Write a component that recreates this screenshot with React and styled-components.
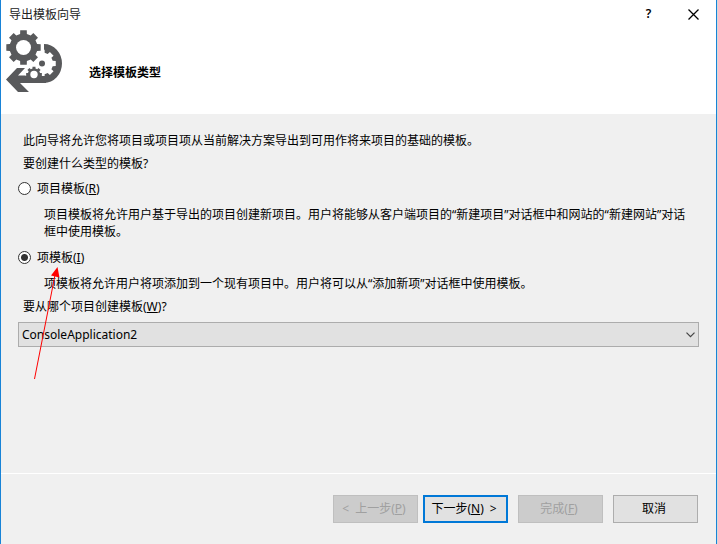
import { useState } from "react";
import styled, { createGlobalStyle } from "styled-components";

const GlobalStyle = createGlobalStyle`
  * {
    box-sizing: border-box;
  }
  body {
    margin: 0;
    background: #fff;
    color: #000;
    font-family: "Noto Sans", "Noto Sans CJK SC", sans-serif;
    font-size: 12px;
    line-height: 16px;
  }
  button, input, select {
    font: inherit;
    color: inherit;
  }
`;

const Frame = styled.div`
  background: #d8d8d8;
  padding-right: 1px;
`;

const Dialog = styled.form`
  display: flex;
  flex-direction: column;
  min-height: 100vh;
  border: solid #1883d7;
  border-width: 0 1px;
  background: #f0f0f0;
`;

const TitleBar = styled.div`
  display: flex;
  align-items: center;
  height: 28px;
  padding-left: 8px;
  background: #fff;
  color: #222;
`;

const Caption = styled.span`
  flex: 1;
  padding-top: 2px;
`;

const CaptionButton = styled.button`
  display: flex;
  align-items: center;
  justify-content: center;
  width: 45px;
  height: 28px;
  padding: 0;
  border: 0;
  background: none;
  color: #000;
  font-weight: 600;
`;

const Header = styled.header`
  display: flex;
  align-items: center;
  gap: 26px;
  height: 86px;
  padding: 0 4px 20px;
  background: #fff;
`;

const Heading = styled.h1`
  margin: 24px 0 0;
  font-size: 12px;
  font-weight: 700;
`;

const Body = styled.main`
  flex: 1;
  padding: 19px 17px;
`;

const Text = styled.p`
  margin: 0 5px 7px;
`;

const Option = styled.label`
  display: flex;
  align-items: flex-start;
  gap: 6px;
  width: fit-content;
  margin-top: 9px;
`;

const Radio = styled.input`
  appearance: none;
  width: 13px;
  height: 13px;
  margin: 1px 0 0;
  border: 1px solid #333;
  border-radius: 50%;
  background: #fff;
  &:checked {
    background: radial-gradient(circle, #333 3px, #fff 4px);
  }
`;

const Hint = styled.p`
  margin: 9px 8px 10px 26px;
  line-height: 17px;
`;

const FieldLabel = styled.label`
  display: block;
  margin: -3px 5px 7px;
`;

const SelectBox = styled.div`
  display: grid;
  align-items: center;
  svg {
    grid-area: 1 / 1;
    justify-self: end;
    margin-right: 4px;
    pointer-events: none;
  }
`;

const Select = styled.select`
  grid-area: 1 / 1;
  appearance: none;
  width: 100%;
  height: 25px;
  padding: 0 20px 0 3px;
  border: 1px solid #acacac;
  border-radius: 0;
  background: #e1e1e1;
`;

const Footer = styled.footer`
  display: flex;
  justify-content: flex-end;
  gap: 10px;
  height: 71px;
  padding: 21px 18px 0;
  border-top: 1px solid #fff;
`;

const StepButtons = styled.div`
  display: flex;
  gap: 5px;
`;

const Button = styled.button`
  display: flex;
  align-items: center;
  justify-content: center;
  gap: ${(props) => (props.$arrow ? "6px" : "0")};
  width: 85px;
  height: 28px;
  padding: 0 3px 0 0;
  border: ${(props) => (props.$primary ? "2px solid #0078d7" : "1px solid #adadad")};
  background: #e1e1e1;
  &:disabled {
    border-color: #bfbfbf;
    background: #ccc;
    color: #a0a0a0;
  }
`;

// drawn over the form, pointing at the chosen option
const Pointer = styled.svg`
  position: absolute;
  left: 30px;
  top: 264px;
  pointer-events: none;
`;

function gear(cx, cy, outer, inner, teeth, turn = 0) {
  const step = (Math.PI * 2) / teeth;
  const points = [];
  for (let i = 0; i < teeth; i++) {
    const a = i * step + turn;
    [[-0.31, inner], [-0.24, outer], [0.24, outer], [0.31, inner]].forEach(([t, r]) => {
      points.push(`${(cx + r * Math.cos(a + t * step)).toFixed(2)},${(cy + r * Math.sin(a + t * step)).toFixed(2)}`);
    });
  }
  return points.join(" ");
}

function ExportIcon() {
  return (
    <svg width="58" height="66" viewBox="5 28 58 66" aria-hidden="true">
      <path d="M44 44A18 19.500 0 0 1 44 83H20L29 92H18L6 79.500L17 68H25L18 75.500H44Z" fill="#58595b" />
      <polygon points={gear(42, 63.5, 14, 11, 8)} fill="#fff" />
      <circle cx="42" cy="63.500" r="3" fill="#58595b" />
      <circle cx="34" cy="74.500" r="8.500" fill="#fff" />
      <polygon points={gear(34, 74.5, 8, 6.2, 8)} fill="#58595b" />
      <path d="M18 76H46V83H20Z" fill="#58595b" />
      <circle cx="34" cy="74.500" r="3.700" fill="#fff" />
      <polygon points={gear(23.5, 47.5, 17.5, 14, 8)} fill="#58595b" />
      <circle cx="23.500" cy="47.500" r="7.500" fill="#fff" />
    </svg>
  );
}

export default function App() {
  const [kind, setKind] = useState("item");

  return (
    <Frame>
      <GlobalStyle />
      <Dialog onSubmit={(e) => e.preventDefault()}>
        <TitleBar>
          <Caption>导出模板向导</Caption>
          <CaptionButton type="button" aria-label="帮助">?</CaptionButton>
          <CaptionButton type="button" aria-label="关闭">
            <svg width="11" height="11" viewBox="0 0 11 11" stroke="#000" strokeWidth="1.300">
              <path d="M0.500 0.500L10.500 10.500M10.500 0.500L0.500 10.500" />
            </svg>
          </CaptionButton>
        </TitleBar>
        <Header>
          <ExportIcon />
          <Heading>选择模板类型</Heading>
        </Header>
        <Body>
          <Text>此向导将允许您将项目或项目项从当前解决方案导出到可用作将来项目的基础的模板。</Text>
          <Text>要创建什么类型的模板?</Text>
          <Option>
            <Radio type="radio" name="kind" checked={kind === "project"} onChange={() => setKind("project")} />
            <span>项目模板(<u>R</u>)</span>
          </Option>
          <Hint>
            项目模板将允许用户基于导出的项目创建新项目。用户将能够从客户端项目的“新建项目”对话框中和网站的“新建网站”对话框中使用模板。
          </Hint>
          <Option>
            <Radio type="radio" name="kind" checked={kind === "item"} onChange={() => setKind("item")} />
            <span>项模板(<u>I</u>)</span>
          </Option>
          <Hint>项模板将允许用户将项添加到一个现有项目中。用户将可以从“添加新项”对话框中使用模板。</Hint>
          <FieldLabel htmlFor="project">要从哪个项目创建模板(<u>W</u>)?</FieldLabel>
          <SelectBox>
            <Select id="project">
              <option>ConsoleApplication2</option>
            </Select>
            <svg width="9" height="6" viewBox="0 0 9 6" fill="none" stroke="#444" strokeWidth="1.200">
              <path d="M0.500 0.700L4.500 4.700L8.500 0.700" />
            </svg>
          </SelectBox>
        </Body>
        <Footer>
          <StepButtons>
            <Button type="button" disabled $arrow>
              <span>&lt;</span>
              <span>上一步(<u>P</u>)</span>
            </Button>
            <Button type="submit" $primary $arrow>
              <span>下一步(<u>N</u>)</span>
              <span>&gt;</span>
            </Button>
          </StepButtons>
          <Button type="button" disabled>
            <span>完成(<u>F</u>)</span>
          </Button>
          <Button type="button">取消</Button>
        </Footer>
      </Dialog>
      <Pointer width="34" height="118" viewBox="30 264 34 118">
        <path d="M34.500 379L55 275" stroke="#f00" />
        <path d="M57.500 267L51 275.500L59.500 277.500Z" fill="#f00" />
      </Pointer>
    </Frame>
  );
}
